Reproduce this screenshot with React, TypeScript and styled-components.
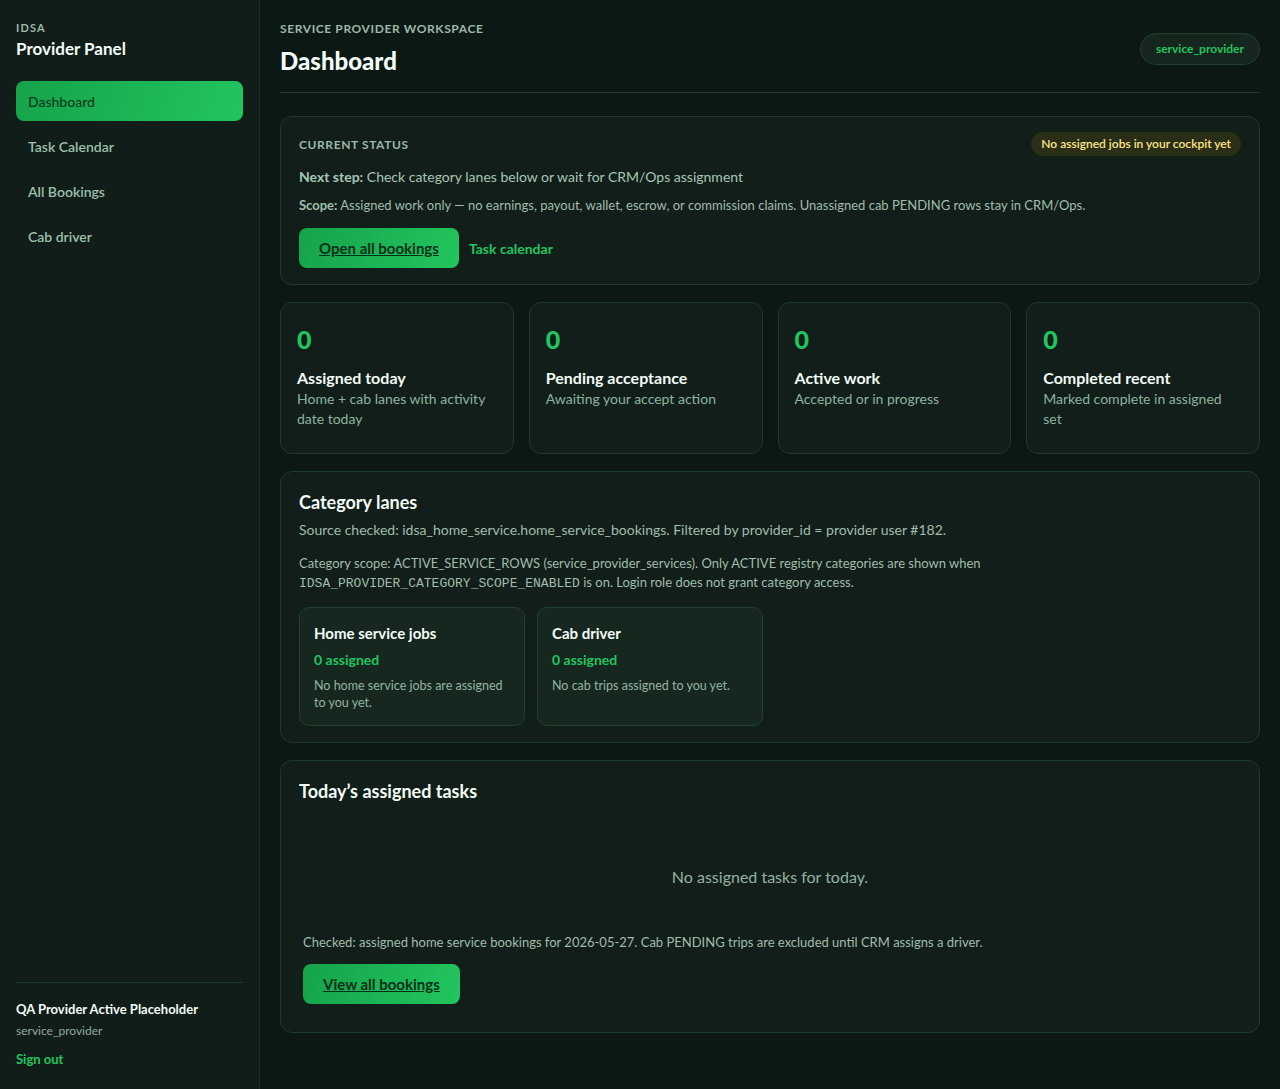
import styled, { createGlobalStyle } from 'styled-components';

const GlobalStyle = createGlobalStyle`
  * { box-sizing: border-box; }
  body {
    margin: 0;
    background: #0c1814;
    font-family: "Segoe UI", Lato, "Noto Sans", sans-serif;
    color: #e8f3ec;
  }
`;

const stats = [
  { label: 'Assigned today', desc: 'Home + cab lanes with activity date today' },
  { label: 'Pending acceptance', desc: 'Awaiting your accept action' },
  { label: 'Active work', desc: 'Accepted or in progress' },
  { label: 'Completed recent', desc: 'Marked complete in assigned set' },
];

const navItems = ['Dashboard', 'Task Calendar', 'All Bookings', 'Cab driver'];

function App() {
  return (
    <>
      <GlobalStyle />
      <Layout>
        <Sidebar>
          <Brand>
            <BrandSmall>IDSA</BrandSmall>
            <BrandTitle>Provider Panel</BrandTitle>
          </Brand>
          <Nav>
            {navItems.map((item, i) => (
              <NavItem key={item} $active={i === 0}>{item}</NavItem>
            ))}
          </Nav>
          <SideFooter>
            <UserName>QA Provider Active Placeholder</UserName>
            <UserRole>service_provider</UserRole>
            <SignOut>Sign out</SignOut>
          </SideFooter>
        </Sidebar>

        <Main>
          <Header>
            <div>
              <Eyebrow>SERVICE PROVIDER WORKSPACE</Eyebrow>
              <PageTitle>Dashboard</PageTitle>
            </div>
            <RolePill>service_provider</RolePill>
          </Header>

          <StatusCard>
            <StatusTop>
              <SectionLabel>CURRENT STATUS</SectionLabel>
              <WarnPill>No assigned jobs in your cockpit yet</WarnPill>
            </StatusTop>
            <NextStep><b>Next step:</b> Check category lanes below or wait for CRM/Ops assignment</NextStep>
            <ScopeText><b>Scope:</b> Assigned work only — no earnings, payout, wallet, escrow, or commission claims. Unassigned cab PENDING rows stay in CRM/Ops.</ScopeText>
            <Actions>
              <PrimaryButton>Open all bookings</PrimaryButton>
              <TextLink>Task calendar</TextLink>
            </Actions>
          </StatusCard>

          <StatGrid>
            {stats.map((s) => (
              <StatCard key={s.label}>
                <StatValue>0</StatValue>
                <StatLabel>{s.label}</StatLabel>
                <StatDesc>{s.desc}</StatDesc>
              </StatCard>
            ))}
          </StatGrid>

          <Card>
            <CardTitle>Category lanes</CardTitle>
            <SourceText>Source checked: idsa_home_service.home_service_bookings. Filtered by provider_id = provider user #182.</SourceText>
            <ScopeNote>
              Category scope: ACTIVE_SERVICE_ROWS (service_provider_services). Only ACTIVE registry categories are shown when <Code>IDSA_PROVIDER_CATEGORY_SCOPE_ENABLED</Code> is on. Login role does not grant category access.
            </ScopeNote>
            <LaneRow>
              <LaneCard>
                <LaneTitle>Home service jobs</LaneTitle>
                <LaneCount>0 assigned</LaneCount>
                <LaneDesc>No home service jobs are assigned to you yet.</LaneDesc>
              </LaneCard>
              <LaneCard>
                <LaneTitle>Cab driver</LaneTitle>
                <LaneCount>0 assigned</LaneCount>
                <LaneDesc>No cab trips assigned to you yet.</LaneDesc>
              </LaneCard>
            </LaneRow>
          </Card>

          <Card>
            <CardTitle>Today’s assigned tasks</CardTitle>
            <Empty>No assigned tasks for today.</Empty>
            <TasksFoot>
              <CheckedText>Checked: assigned home service bookings for 2026-05-27. Cab PENDING trips are excluded until CRM assigns a driver.</CheckedText>
              <PrimaryButton>View all bookings</PrimaryButton>
            </TasksFoot>
          </Card>
        </Main>
      </Layout>
    </>
  );
}

export default App;

const Layout = styled.div`
  display: flex;
  min-height: 1089px;
`;

const Sidebar = styled.aside`
  width: 260px;
  flex-shrink: 0;
  background: #111d19;
  border-right: 1px solid #1c3027;
  padding: 20px 16px 21px;
  display: flex;
  flex-direction: column;
`;

const Brand = styled.div`
  margin-bottom: 20px;
`;

const BrandSmall = styled.div`
  font-size: 11px;
  font-weight: 700;
  letter-spacing: 1.2px;
  color: #9cb8aa;
  line-height: 16px;
`;

const BrandTitle = styled.div`
  font-size: 17px;
  font-weight: 700;
  color: #f3fbf6;
  line-height: 24px;
  margin-top: 1px;
`;

const Nav = styled.nav`
  display: flex;
  flex-direction: column;
  gap: 5px;
`;

const NavItem = styled.div<{ $active?: boolean }>`
  height: 40px;
  display: flex;
  align-items: center;
  padding: 0 12px;
  border-radius: 8px;
  font-size: 14px;
  font-weight: ${(p) => (p.$active ? 500 : 600)};
  color: ${(p) => (p.$active ? '#0b3a1c' : '#9ec0ac')};
  background: ${(p) => (p.$active ? 'linear-gradient(110deg, #16a34a, #22c55e)' : 'transparent')};
`;

const SideFooter = styled.div`
  margin-top: auto;
  border-top: 1px solid #1f3a2e;
  padding-top: 17px;
`;

const UserName = styled.div`
  font-size: 13px;
  font-weight: 700;
  color: #f3fbf6;
  line-height: 18px;
`;

const UserRole = styled.div`
  font-size: 12px;
  color: #8fab9d;
  margin-top: 5px;
  line-height: 16px;
`;

const SignOut = styled.div`
  font-size: 13px;
  font-weight: 700;
  color: #22c55e;
  margin-top: 11px;
  line-height: 18px;
`;

const Main = styled.main`
  flex: 1;
  padding: 20px 20px 56px;
  display: flex;
  flex-direction: column;
  gap: 17px;
`;

const Header = styled.header`
  display: flex;
  justify-content: space-between;
  align-items: flex-start;
  padding-bottom: 17px;
  border-bottom: 1px solid #1e3a2e;
  margin-bottom: 6px;
`;

const Eyebrow = styled.div`
  font-size: 12px;
  font-weight: 700;
  letter-spacing: 0.6px;
  color: #9cb8aa;
  line-height: 18px;
`;

const PageTitle = styled.h1`
  margin: 9px 0 0;
  font-size: 24px;
  font-weight: 900;
  color: #f3fbf6;
  line-height: 28px;
`;

const RolePill = styled.div`
  margin-top: 13px;
  padding: 6px 15px;
  border-radius: 999px;
  border: 1px solid #21402f;
  background: #14261d;
  color: #22c55e;
  font-size: 12px;
  font-weight: 700;
  line-height: 18px;
`;

const Card = styled.section`
  background: #111e19;
  border: 1px solid #1e3a2d;
  border-radius: 12px;
  padding: 18px 18px 16px;
`;

const StatusCard = styled(Card)`
  padding-top: 15px;
`;

const StatusTop = styled.div`
  display: flex;
  justify-content: space-between;
  align-items: center;
`;

const SectionLabel = styled.div`
  font-size: 12px;
  font-weight: 700;
  letter-spacing: 0.6px;
  color: #9cb8aa;
`;

const WarnPill = styled.div`
  padding: 3px 10px;
  border-radius: 999px;
  background: #2a2e16;
  color: #fde68a;
  font-size: 12px;
  font-weight: 600;
  line-height: 18px;
`;

const NextStep = styled.p`
  margin: 11px 0 0;
  font-size: 14px;
  line-height: 20px;
  color: #a8c6b5;
  b { color: #a8c6b5; font-weight: 700; }
`;

const ScopeText = styled.p`
  margin: 9px 0 0;
  font-size: 13px;
  line-height: 18px;
  color: #a0bdad;
  b { font-weight: 700; }
`;

const Actions = styled.div`
  display: flex;
  align-items: center;
  gap: 10px;
  margin-top: 14px;
`;

const PrimaryButton = styled.button`
  height: 40px;
  padding: 0 20px;
  border: none;
  border-radius: 8px;
  background: linear-gradient(110deg, #16a34a, #22c55e);
  color: #06301a;
  font-family: inherit;
  font-size: 15px;
  font-weight: 700;
  text-decoration: underline;
  cursor: pointer;
  align-self: flex-start;
`;

const TextLink = styled.span`
  font-size: 14px;
  font-weight: 700;
  color: #22c55e;
`;

const StatGrid = styled.div`
  display: grid;
  grid-template-columns: repeat(4, 1fr);
  gap: 15px;
`;

const StatCard = styled.div`
  background: #111e19;
  border: 1px solid #1e3a2d;
  border-radius: 12px;
  padding: 20px 16px 18px;
  min-height: 152px;
`;

const StatValue = styled.div`
  font-size: 25px;
  font-weight: 900;
  color: #22c55e;
  line-height: 32px;
`;

const StatLabel = styled.div`
  margin-top: 12px;
  font-size: 16px;
  font-weight: 700;
  color: #f3fbf6;
  line-height: 22px;
`;

const StatDesc = styled.div`
  font-size: 14px;
  line-height: 20px;
  color: #8fb3a0;
`;

const CardTitle = styled.h2`
  margin: 0;
  font-size: 18px;
  font-weight: 700;
  color: #f3fbf6;
  line-height: 24px;
`;

const SourceText = styled.p`
  margin: 6px 0 0;
  font-size: 14px;
  line-height: 20px;
  color: #a0bdad;
`;

const ScopeNote = styled.p`
  margin: 14px 0 0;
  font-size: 13px;
  line-height: 19px;
  color: #a0bdad;
`;

const Code = styled.code`
  font-family: "Liberation Mono", "DejaVu Sans Mono", monospace;
  font-size: 13px;
`;

const LaneRow = styled.div`
  display: flex;
  gap: 12px;
  margin-top: 14px;
`;

const LaneCard = styled.div`
  width: 226px;
  background: #15271f;
  border: 1px solid #21402f;
  border-radius: 10px;
  padding: 15px 14px 14px;
`;

const LaneTitle = styled.div`
  font-size: 15px;
  font-weight: 700;
  color: #f3fbf6;
  line-height: 20px;
`;

const LaneCount = styled.div`
  margin-top: 7px;
  font-size: 14px;
  font-weight: 700;
  color: #22c55e;
  line-height: 20px;
`;

const LaneDesc = styled.div`
  margin-top: 7px;
  font-size: 12.5px;
  line-height: 17px;
  color: #94b3a3;
`;

const Empty = styled.div`
  text-align: center;
  font-size: 16px;
  color: #94b3a3;
  padding: 63px 0 45px;
  line-height: 22px;
`;

const TasksFoot = styled.div`
  display: flex;
  flex-direction: column;
  gap: 13px;
  padding: 0 4px 12px;
`;

const CheckedText = styled.div`
  font-size: 13px;
  line-height: 18px;
  color: #a0bdad;
`;
